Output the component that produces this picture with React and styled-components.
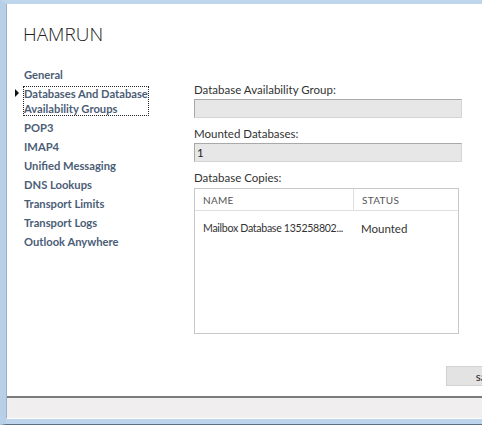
import styled, { createGlobalStyle } from "styled-components"

const Global = createGlobalStyle`
  html, body { margin: 0; padding: 0; background: #fff; }
  body { font-family: Lato, "Open Sans", sans-serif; }
`

const Window = styled.div`
  width: 482px;
  height: 425px;
  box-sizing: border-box;
  overflow: hidden;
  display: flex;
  flex-direction: column;
  background: #bdd4ec;
  border-top: 4px solid #bfd5ec;
  border-left: 6px solid #b8cfe8;
  border-bottom: 1px solid #5a6f86;
  padding-bottom: 5px;
`

const Inner = styled.div`
  flex: 1;
  display: flex;
  flex-direction: column;
  border-left: 1px solid #9fb0c4;
  border-bottom: 1px solid #fdfdfd;
  min-height: 0;
`

const Main = styled.div`
  flex: 1;
  background: #fff;
  display: flex;
  flex-direction: column;
  padding: 17px 0 0 16px;
  min-height: 0;
`

const Title = styled.h1`
  margin: 0;
  font-family: "Open Sans", sans-serif;
  font-weight: 300;
  font-size: 19px;
  line-height: 26px;
  color: #222;
`

const Body = styled.div`
  display: flex;
  margin-top: 20px;
`

const Nav = styled.ul`
  list-style: none;
  margin: 0;
  padding: 0;
  width: 171px;
  display: flex;
  flex-direction: column;
  align-items: flex-start;
  gap: 4px;
`

const NavItem = styled.li`
  position: relative;
  font-family: Lato, sans-serif;
  font-size: 11.2px;
  font-weight: 700;
  line-height: 15px;
  color: #4b5d76;
  padding: 0 1px;
  white-space: nowrap;
  outline: ${p => (p.$active ? "1px dotted #222" : "none")};
  outline-offset: -1px;
`

const Arrow = styled.span`
  position: absolute;
  left: -8px;
  top: 3px;
  width: 0;
  height: 0;
  border-top: 4px solid transparent;
  border-bottom: 4px solid transparent;
  border-left: 4px solid #111;
`

const Panel = styled.div`
  display: flex;
  flex-direction: column;
  margin-top: 15px;
`

const Label = styled.div`
  font-size: 11.5px;
  line-height: 15px;
  color: #333;
  margin-bottom: ${p => p.$mb || 2}px;
`

const Field = styled.div`
  width: 268px;
  height: 19px;
  box-sizing: border-box;
  background: #e7e7e7;
  border: 1px solid #d5d5d5;
  border-top-color: #a9a9a9;
  border-left-color: #a9a9a9;
  font-size: 11.5px;
  line-height: 17px;
  padding-left: 2px;
  color: #222;
  margin-bottom: 8px;
`

const Table = styled.div`
  width: 265px;
  height: 146px;
  box-sizing: border-box;
  border: 1px solid #c9c9c9;
  background: #fff;
`

const Row = styled.div`
  display: grid;
  grid-template-columns: 158px 1fr;
  height: ${p => (p.$head ? 21 : 34)}px;
  align-items: center;
  border-bottom: ${p => (p.$head ? "1px solid #dedede" : "none")};
`

const Cell = styled.div`
  padding-left: 8px;
  font-size: ${p => (p.$head ? 10 : 11.5)}px;
  color: ${p => (p.$head ? "#555" : "#333")};
  letter-spacing: ${p => (p.$head ? "0.3px" : "0")};
  height: 100%;
  display: flex;
  align-items: center;
  white-space: nowrap;
  overflow: hidden;
  border-left: ${p => (p.$divider ? "1px solid #dedede" : "none")};
`

const NameText = styled.span`
  font-size: 10.6px;
  letter-spacing: -0.3px;
`

const ButtonBar = styled.div`
  margin-top: auto;
  margin-bottom: 10px;
  display: flex;
  justify-content: flex-end;
  margin-right: -46px;
`

const Button = styled.button`
  width: 82px;
  height: 20px;
  border: 1px solid #d2d2d2;
  background: #e3e3e3;
  font-family: Lato, sans-serif;
  font-size: 11.5px;
  color: #222;
  padding: 0;
  text-align: center;
`

const Footer = styled.div`
  height: 20px;
  background: #f0eeee;
  border-top: 2px solid #7b7b7b;
`

const navItems = [
  ["General"],
  ["Databases And Database", "Availability Groups"],
  ["POP3"],
  ["IMAP4"],
  ["Unified Messaging"],
  ["DNS Lookups"],
  ["Transport Limits"],
  ["Transport Logs"],
  ["Outlook Anywhere"],
]

const App = () => {
  return (
    <>
      <Global />
      <Window>
        <Inner>
          <Main>
            <Title>HAMRUN</Title>
            <Body>
              <Nav>
                {navItems.map((lines, i) => (
                  <NavItem key={lines[0]} $active={i === 1}>
                    {i === 1 && <Arrow />}
                    {lines.map((l, j) => (
                      <div key={j}>{l}</div>
                    ))}
                  </NavItem>
                ))}
              </Nav>
              <Panel>
                <Label>Database Availability Group:</Label>
                <Field />
                <Label>Mounted Databases:</Label>
                <Field>1</Field>
                <Label $mb={3}>Database Copies:</Label>
                <Table>
                  <Row $head>
                    <Cell $head>NAME</Cell>
                    <Cell $head $divider>STATUS</Cell>
                  </Row>
                  <Row>
                    <Cell>
                      <NameText>Mailbox Database 135258802...</NameText>
                    </Cell>
                    <Cell>Mounted</Cell>
                  </Row>
                </Table>
              </Panel>
            </Body>
            <ButtonBar>
              <Button>save</Button>
            </ButtonBar>
          </Main>
          <Footer />
        </Inner>
      </Window>
    </>
  )
}

export default App
